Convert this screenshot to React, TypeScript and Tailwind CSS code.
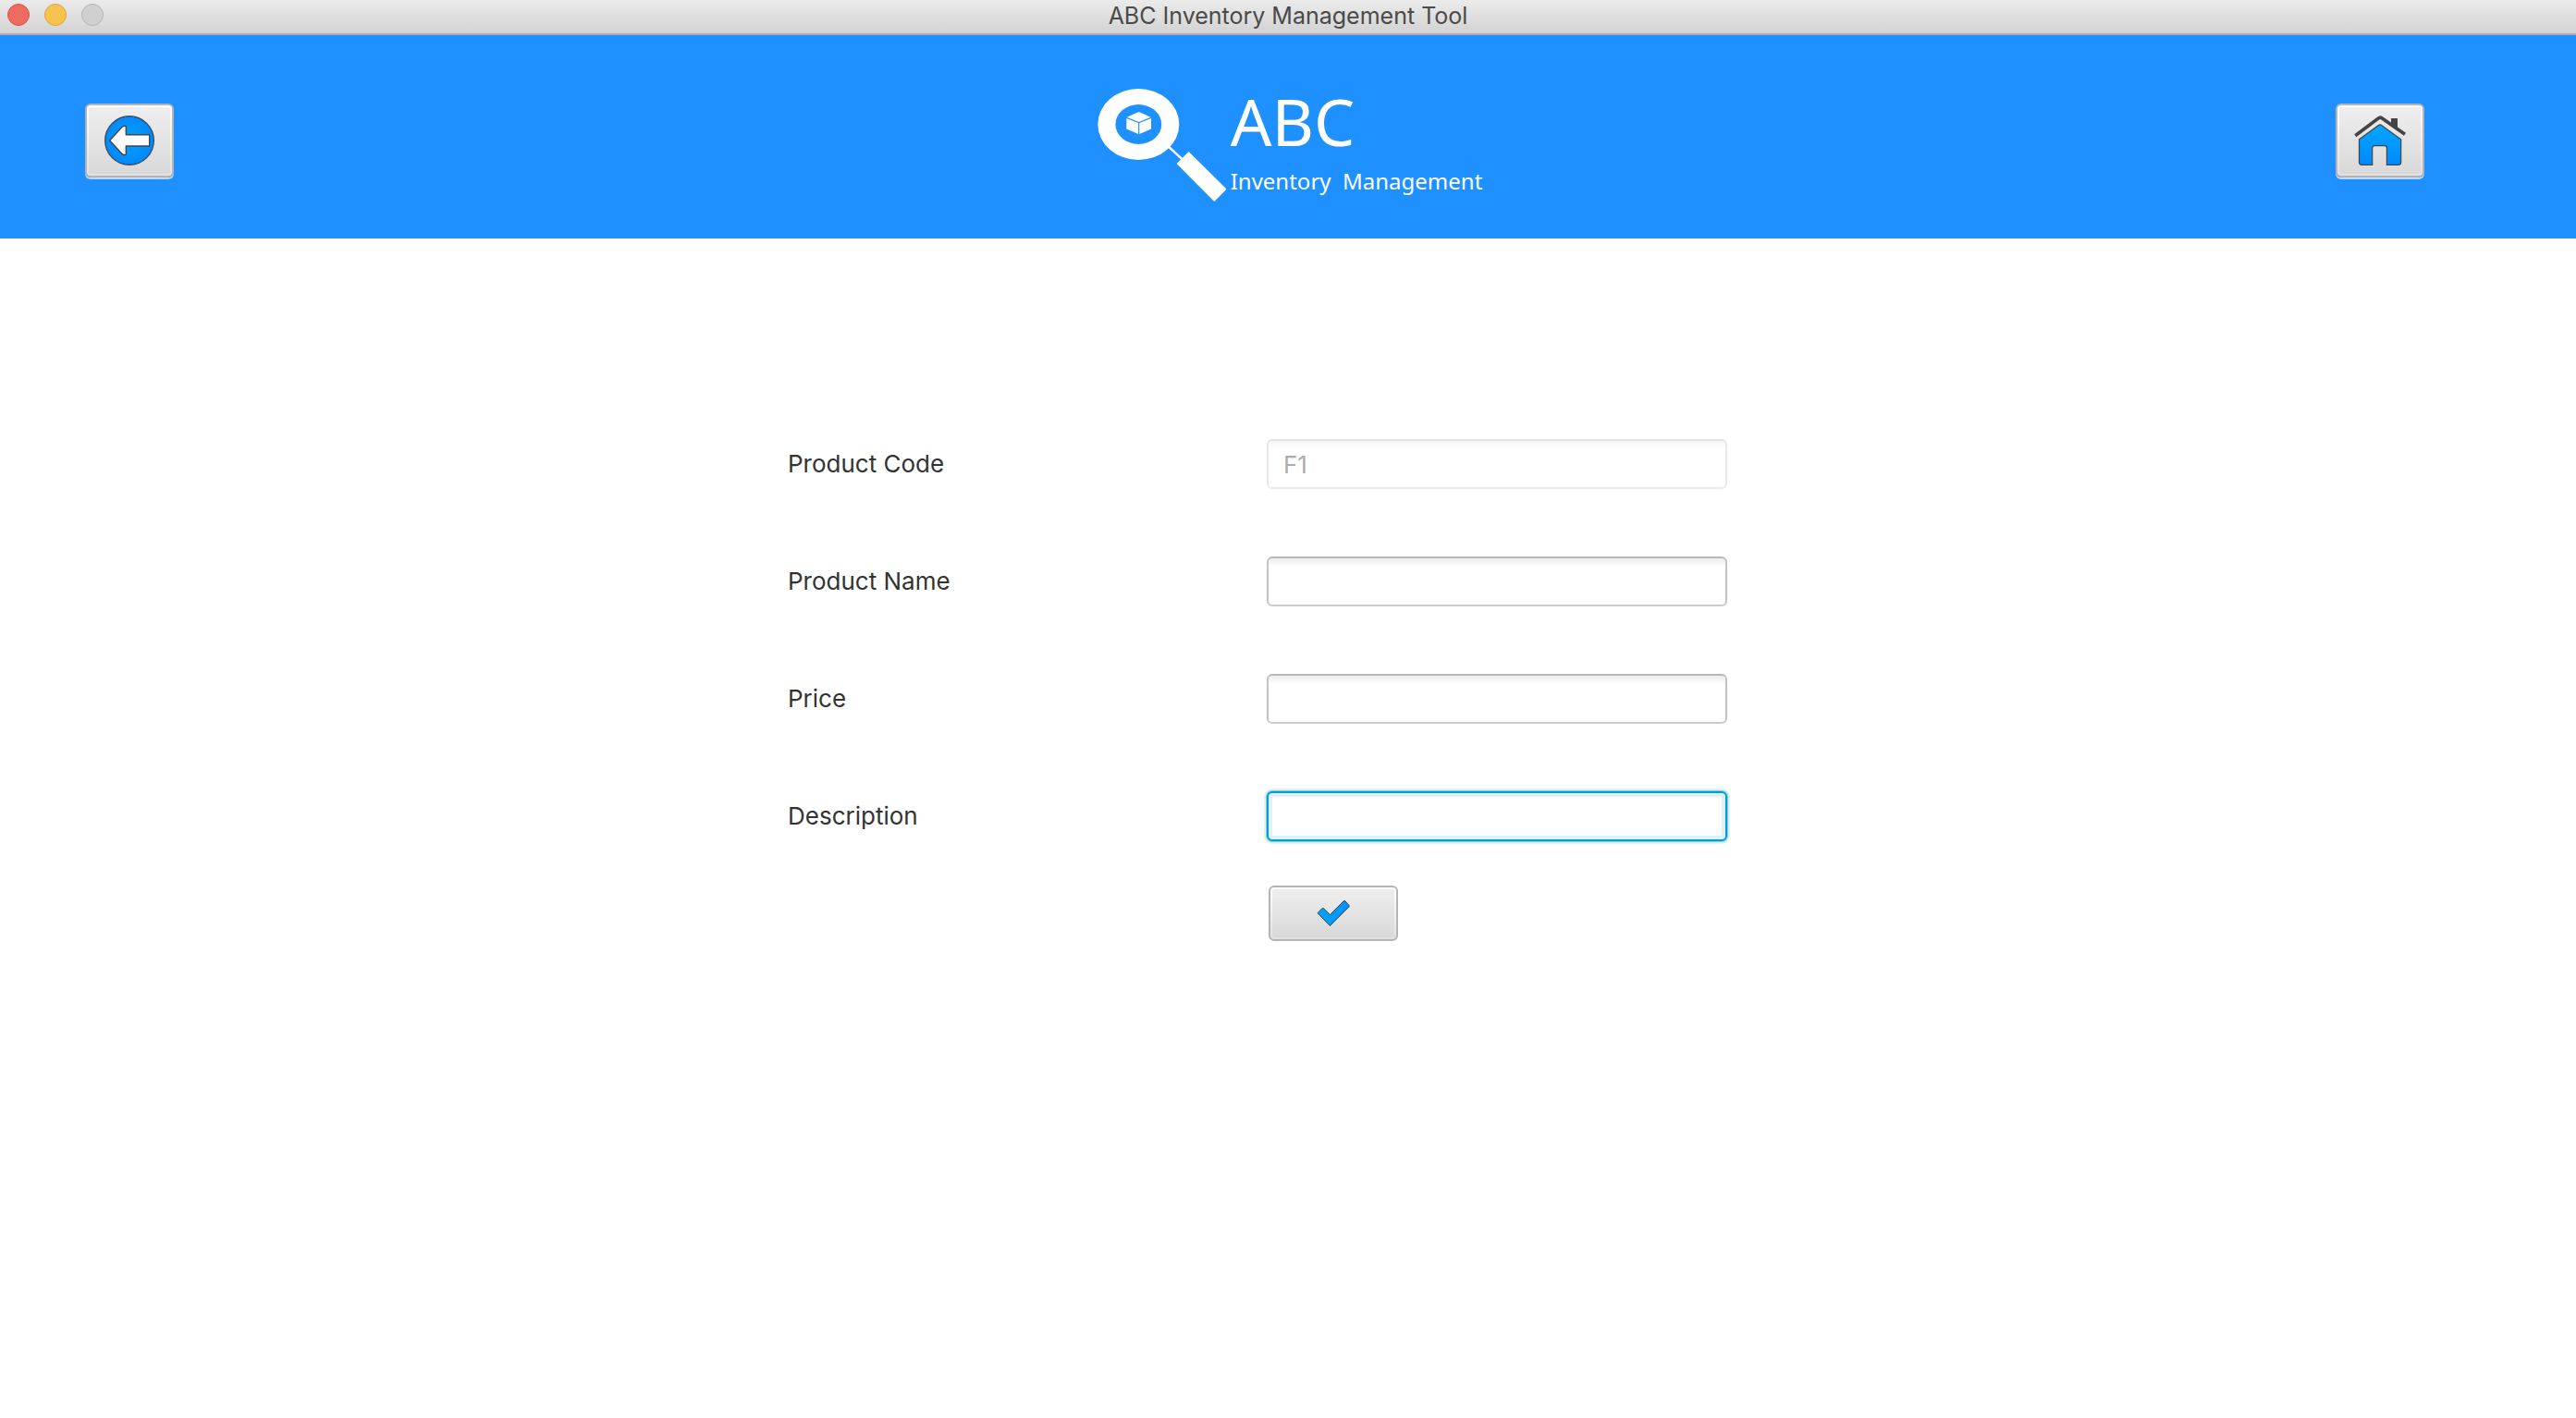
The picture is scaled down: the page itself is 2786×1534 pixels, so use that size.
import type { ReactNode } from "react";

const FIELDS = [
  { id: "code", label: "Product Code", value: "F1", disabled: true },
  { id: "name", label: "Product Name" },
  { id: "price", label: "Price" },
  { id: "description", label: "Description", focused: true },
];

const INPUT_BASE =
  "h-[54px] w-full rounded-md border-2 px-4 text-[26px] leading-8 outline-none bg-white";
const INPUT_NORMAL =
  "border-x-[#c3c3c3] border-t-[#b8b8b8] border-b-[#cccccc] bg-linear-to-b from-[#ececec] to-white to-[9px]";
const INPUT_DISABLED =
  "border-x-[#e8e8e8] border-t-[#e3e3e3] border-b-[#ebebeb] bg-linear-to-b from-[#f7f7f7] to-white to-[9px] text-[#adadad]";
const INPUT_FOCUSED =
  "border-[#039ed3] shadow-[inset_0_0_0_4px_#dcf1f9,0_0_0_1px_#7fcde8,0_0_0_3px_#def2fa]";

function RaisedButton({ label, size, children }: { label: string; size: string; children: ReactNode }) {
  return (
    <button
      type="button"
      aria-label={label}
      className={`flex rounded-md border-2 border-[#b4b4b4] bg-linear-to-b from-white to-[#e2e2e2] p-0.5 ${size}`}
    >
      <span className="flex flex-1 items-center justify-center self-stretch rounded-xs bg-linear-to-b from-[#eeeeee] to-[#d9d9d9]">
        {children}
      </span>
    </button>
  );
}

function BackIcon() {
  return (
    <svg width="54" height="54" viewBox="0 0 54 54" aria-hidden="true">
      <defs>
        <radialGradient id="backFill">
          <stop offset="0" stopColor="#00a2ff" />
          <stop offset="1" stopColor="#0088ff" />
        </radialGradient>
      </defs>
      <circle cx="27" cy="27" r="26.4" fill="url(#backFill)" stroke="#444" strokeWidth="1.2" />
      <path
        d="M5.6 27 18.8 12.6Q21 10.4 23.3 11.6V20.7H48.7V33H23.3V42Q21 43.4 18.8 41.2Z"
        fill="#fdfdfd"
        stroke="#444"
        strokeWidth="1.4"
        strokeLinejoin="round"
      />
    </svg>
  );
}

function HomeIcon() {
  return (
    <svg width="58" height="56" viewBox="0 0 58 56" aria-hidden="true">
      <defs>
        <linearGradient id="homeFill" x1="0" y1="0" x2="0" y2="1">
          <stop offset="0" stopColor="#00a8ff" />
          <stop offset="1" stopColor="#0088ff" />
        </linearGradient>
      </defs>
      <path d="M41 4H48V17.5L41 12.5Z" fill="#444" />
      <path d="M2.3 22.8 27 4.2Q29 2.3 31 3.8L56 21.3" fill="none" stroke="#444" strokeWidth="3.6" />
      <path
        d="M6.5 26.7 27.4 11.6Q29 10.2 30.6 11.4L51.7 26.7V51.6Q51.7 54.4 49 54.4H36.4V36Q36.4 33.7 34 33.7H23Q20.7 33.7 20.7 36V54.4H9.2Q6.5 54.4 6.5 51.6Z"
        fill="url(#homeFill)"
        stroke="#444"
        strokeWidth="1.2"
      />
    </svg>
  );
}

function CheckIcon() {
  return (
    <svg width="36" height="30" viewBox="0 0 36 30" aria-hidden="true">
      <defs>
        <linearGradient id="checkFill" x1="0" y1="0" x2="1" y2="0">
          <stop offset="0" stopColor="#00a4ff" />
          <stop offset="1" stopColor="#0090ff" />
        </linearGradient>
      </defs>
      <path
        d="M1 14.8 5.8 9.7Q6.6 9.2 7.5 9.7L14.4 16.6 29 2Q30 1 31 2L35 6.4Q35.4 7.3 35 7.9L14.4 28.6Z"
        fill="url(#checkFill)"
        stroke="#444"
        strokeWidth="1"
      />
    </svg>
  );
}

function LogoMark() {
  return (
    <svg width="142" height="122" viewBox="0 0 142 122" aria-hidden="true">
      <path
        fillRule="evenodd"
        d="M0.3 38.5A44 38.5 0 0 1 88.3 38.5A44 38.5 0 0 1 0.3 38.5ZM19.4 38.5A24.9 21.5 0 0 0 69.2 38.5A24.9 21.5 0 0 0 19.4 38.5Z"
        fill="#fff"
      />
      <path d="M44.7 25 57.6 30.8 44.7 36 31.6 30.8Z" fill="#fff" />
      <path d="M31.3 32 44.1 37.1V49L31.3 43.6Z" fill="#fff" />
      <path d="M58 32 45.3 37.1V49L58 43.6Z" fill="#fff" />
      <path d="M76 62 92 76.6" stroke="#fff" strokeWidth="2.4" />
      <path
        d="M98.6 69 138.4 108.6 126.3 121 86.6 81Z"
        fill="#fff"
        stroke="#fff"
        strokeWidth="1.6"
        strokeLinejoin="round"
      />
    </svg>
  );
}

export default function App() {
  return (
    <div className="min-h-screen bg-white font-['Inter',sans-serif] text-[#333333]">
      <div className="grid grid-cols-[1fr_auto_1fr] border-b-2 border-[#aeaeae] bg-linear-to-b from-[#ebebeb] to-[#d3d3d3] pb-0.5">
        <div className="flex h-8 items-center gap-4 pl-2">
          <button type="button" aria-label="Close" className="size-6 rounded-full border border-[#d9534b] bg-[#ed6b60]" />
          <button type="button" aria-label="Minimize" className="size-6 rounded-full border border-[#dba53c] bg-[#f6c350]" />
          <button type="button" aria-label="Zoom" disabled className="size-6 rounded-full border border-[#b4b4b4] bg-[#d0d0d0]" />
        </div>
        <h1 className="text-[25px] leading-[34px] text-[#4a4a4a]">ABC Inventory Management Tool</h1>
      </div>

      <header className="grid h-[220px] grid-cols-[1fr_auto_1fr] items-center bg-[#1e90ff] pt-2">
        <div className="pl-[92px]">
          <RaisedButton label="Back" size="h-20 w-24 shadow-[0_2px_0_#b8dcff]">
            <BackIcon />
          </RaisedButton>
        </div>
        <div className="flex gap-0.5 pt-2.5 pl-1 font-['Noto_Sans','Open_Sans',sans-serif] text-white">
          <LogoMark />
          <div>
            <p className="text-[70px] leading-[70px]">ABC</p>
            <p className="mt-3 text-[24px] leading-9 whitespace-pre">Inventory  Management</p>
          </div>
        </div>
        <div className="flex justify-end pr-[164px]">
          <RaisedButton label="Home" size="h-20 w-24 shadow-[0_2px_0_#b8dcff]">
            <HomeIcon />
          </RaisedButton>
        </div>
      </header>

      <main className="flex justify-center pt-[217px] pr-[66px]">
        <form className="grid grid-cols-[518px_498px]">
          <div className="col-span-2 flex flex-col gap-[73px]">
            {FIELDS.map((f) => (
              <div key={f.id} className="grid grid-cols-[518px_498px] items-center">
                <label htmlFor={f.id} className="text-[26px] leading-8">
                  {f.label}
                </label>
                <input
                  id={f.id}
                  type="text"
                  defaultValue={f.value}
                  disabled={f.disabled}
                  className={`${INPUT_BASE} ${f.disabled ? INPUT_DISABLED : f.focused ? INPUT_FOCUSED : INPUT_NORMAL}`}
                />
              </div>
            ))}
          </div>
          <div className="col-start-2 mt-12 pl-0.5">
            <RaisedButton label="Save product" size="h-[60px] w-[140px]">
              <CheckIcon />
            </RaisedButton>
          </div>
        </form>
      </main>
    </div>
  );
}
